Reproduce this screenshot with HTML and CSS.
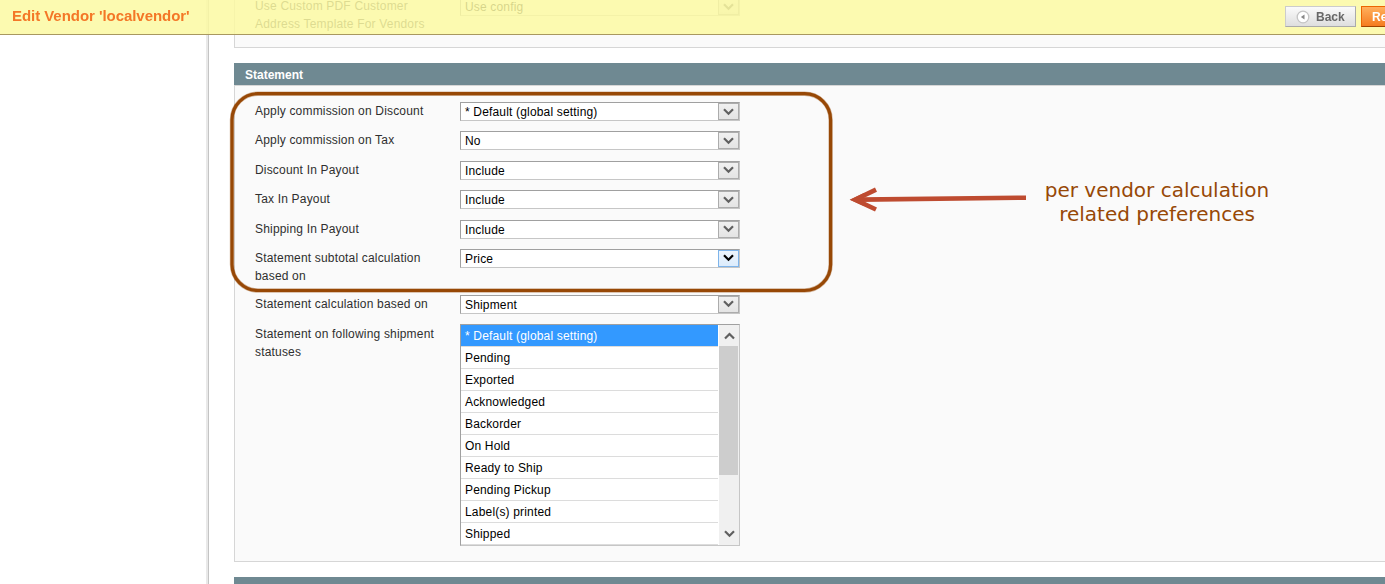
FILE: index.html
```html
<!DOCTYPE html>
<html lang="en">

<head>
    <meta charset="UTF-8">
    <meta name="viewport" content="width=device-width, initial-scale=1.0">
    <title>Edit Vendor</title>
    <link rel="stylesheet" href="styles.css">
</head>

<body>
    <!-- floating toolbar -->
    <header class="toolbar">
        <h3>Edit Vendor 'localvendor'</h3>
        <div class="buttons">
            <button class="btn back">
                <svg width="14" height="14" viewBox="0 0 14 14">
                    <circle cx="7" cy="7" r="5.8" fill="#fff" stroke="#c4c4c4" stroke-width="1.3" />
                    <path d="M8.5 4.6v5L4.9 7.1z" fill="#888" />
                </svg>
                <span>Back</span>
            </button>
            <button class="btn reset">Reset</button>
        </div>
    </header>

    <div class="columns">
        <aside class="side"></aside>
        <main class="main">
            <section class="fieldset first">
                <div class="row">
                    <label>Use Custom PDF Customer<br>Address Template For Vendors</label>
                    <div class="select"><span>Use config</span><i><svg width="11" height="8"><path d="M1 1.2 5.5 5.7 10 1.2" /></svg></i></div>
                </div>
            </section>

            <h4 class="head">Statement</h4>
            <section class="fieldset">
                <div class="row">
                    <label>Apply commission on Discount</label>
                    <div class="select"><span>* Default (global setting)</span><i><svg width="11" height="8"><path d="M1 1.2 5.5 5.7 10 1.2" /></svg></i></div>
                </div>
                <div class="row">
                    <label>Apply commission on Tax</label>
                    <div class="select"><span>No</span><i><svg width="11" height="8"><path d="M1 1.2 5.5 5.7 10 1.2" /></svg></i></div>
                </div>
                <div class="row">
                    <label>Discount In Payout</label>
                    <div class="select"><span>Include</span><i><svg width="11" height="8"><path d="M1 1.2 5.5 5.7 10 1.2" /></svg></i></div>
                </div>
                <div class="row">
                    <label>Tax In Payout</label>
                    <div class="select"><span>Include</span><i><svg width="11" height="8"><path d="M1 1.2 5.5 5.7 10 1.2" /></svg></i></div>
                </div>
                <div class="row">
                    <label>Shipping In Payout</label>
                    <div class="select"><span>Include</span><i><svg width="11" height="8"><path d="M1 1.2 5.5 5.7 10 1.2" /></svg></i></div>
                </div>
                <div class="row tall">
                    <label>Statement subtotal calculation<br>based on</label>
                    <div class="select hover"><span>Price</span><i><svg width="11" height="8"><path d="M1 1.2 5.5 5.7 10 1.2" /></svg></i></div>
                </div>
                <div class="row">
                    <label>Statement calculation based on</label>
                    <div class="select"><span>Shipment</span><i><svg width="11" height="8"><path d="M1 1.2 5.5 5.7 10 1.2" /></svg></i></div>
                </div>
                <div class="row multi">
                    <label>Statement on following shipment<br>statuses</label>
                    <div class="list">
                        <ul>
                            <li class="selected">* Default (global setting)</li>
                            <li>Pending</li>
                            <li>Exported</li>
                            <li>Acknowledged</li>
                            <li>Backorder</li>
                            <li>On Hold</li>
                            <li>Ready to Ship</li>
                            <li>Pending Pickup</li>
                            <li>Label(s) printed</li>
                            <li>Shipped</li>
                        </ul>
                        <div class="scrollbar">
                            <svg width="11" height="8"><path d="M1 6.5 5.5 2 10 6.5" /></svg>
                            <div class="thumb"></div>
                            <svg class="down" width="11" height="8"><path d="M1 1.2 5.5 5.7 10 1.2" /></svg>
                        </div>
                    </div>
                </div>
            </section>

            <h4 class="head"></h4>
        </main>
    </div>

    <!-- callout over the form -->
    <svg class="marks" width="1385" height="584">
        <rect class="halo" x="232" y="93.7" width="598.6" height="196.8" rx="26" />
        <rect class="line" x="232" y="93.7" width="598.6" height="196.8" rx="26" />
        <path class="arrow" d="M1026 197.7 860 199.6" />
        <path class="arrow" d="M876 189.6 855 199.7 876 209.5" />
        <path class="tip" d="M850 199.7 864 193v13z" />
    </svg>
    <p class="note">per vendor calculation<br>related preferences</p>
</body>

</html>
```

FILE: styles.css
```css
* {
    margin: 0;
    padding: 0;
    box-sizing: border-box;
}

body {
    height: 584px;
    overflow: hidden;
    position: relative;
    background: #fff;
    color: #2f2f2f;
    font: 12px/18px "Liberation Sans", Arial, sans-serif;
}

ul li {
    list-style: none;
}

svg {
    display: block;
}

.toolbar {
    position: fixed;
    top: 0;
    left: 0;
    z-index: 5;
    display: flex;
    justify-content: space-between;
    width: 1424px;
    height: 35px;
    padding: 6px 12px 0;
    background: rgba(252, 249, 162, .85);
    border-bottom: 1px solid #a89860;
}

.toolbar h3 {
    color: #f47727;
    font-size: 15px;
    line-height: 20px;
    letter-spacing: -.05px;
}

.buttons {
    display: flex;
    gap: 5px;
    width: 127px;
}

.btn {
    display: flex;
    align-items: center;
    height: 21px;
    border: 1px solid #ccc;
    border-color: #ccc #aaa #aaa #ccc;
    font: bold 12px "Liberation Sans", Arial, sans-serif;
}

.back {
    flex: none;
    width: 71px;
    padding-left: 10px;
    gap: 6px;
    color: #676767;
    background: linear-gradient(#fbfbfb, #dedede);
}

.reset {
    flex: none;
    width: 52px;
    padding-left: 10px;
    color: #fff;
    border-color: #ed6502 #a04300 #a04300 #ed6502;
    background: linear-gradient(#ffb05c, #f57c20);
}

.columns {
    display: flex;
    height: 584px;
}

.side {
    flex: none;
    width: 209px;
    border-right: 1px solid #c4c4c4;
    box-shadow: inset -2px 0 0 #e9e9e9;
}

.main {
    flex: 1;
    padding-left: 25px;
}

.fieldset {
    height: 477px;
    padding: 16px 0 0 20px;
    margin-bottom: 15px;
    background: #fafafa;
    border: 1px solid #d6d6d6;
    border-right: none;
}

.first {
    height: 51px;
    margin-top: -3px;
    padding-top: 0;
    border-top: none;
}

.head {
    height: 22px;
    padding-left: 11px;
    background: #6f8992;
    color: #fff;
    font-size: 12px;
    line-height: 24px;
}

.row {
    display: flex;
    align-items: flex-start;
    height: 29.4px;
}

.tall {
    height: 46px;
}

.multi {
    height: 222px;
}

.row label {
    width: 205px;
    letter-spacing: .18px;
}

.multi label {
    padding-top: 1px;
}

.select {
    display: flex;
    width: 280px;
    height: 19px;
    background: #fff;
    border: 1px solid #c6c6c6;
    border-top-color: #a0a0a0;
    border-left-color: #a0a0a0;
    color: #000;
}

.select span {
    flex: 1;
    padding-left: 4px;
    line-height: 18px;
    letter-spacing: .17px;
}

.select i {
    display: flex;
    align-items: center;
    justify-content: center;
    width: 21px;
    height: 17px;
    background: linear-gradient(#f0f0f0, #e4e4e4);
    border: 1px solid #acacac;
}

.select path,
.scrollbar path {
    fill: none;
    stroke: #606060;
    stroke-width: 2.2;
}

.hover i {
    background: linear-gradient(#ecf4fc, #dcecfc);
    border-color: #7eb4ea;
}

.hover path {
    stroke: #000;
}

.list {
    display: flex;
    width: 280px;
    height: 222px;
    background: #fff;
    border: 1px solid #c6c6c6;
    border-top-color: #a0a0a0;
    border-left-color: #a0a0a0;
    color: #000;
}

.list ul {
    width: 257px;
}

.list li {
    height: 22px;
    padding-left: 4px;
    line-height: 22px;
    letter-spacing: .17px;
    border-bottom: 1px solid #dcdcdc;
}

.list .selected {
    background: #3399ff;
    color: #fff;
}

.scrollbar {
    display: flex;
    flex-direction: column;
    align-items: center;
    width: 20px;
    margin-left: 1px;
    padding: 7px 0;
    background: #f0f0f0;
}

.thumb {
    width: 19px;
    height: 129px;
    margin: 6px 1px 0 0;
    background: #cdcdcd;
}

.down {
    margin-top: auto;
}

.marks {
    position: absolute;
    top: 0;
    left: 0;
    fill: none;
}

.halo {
    stroke: #974806;
    stroke-width: 4.4;
    opacity: .4;
}

.line {
    stroke: #974806;
    stroke-width: 3.2;
}

.arrow {
    stroke: #be4b30;
    stroke-width: 4.6;
}

.tip {
    fill: #be4b30;
}

.note {
    position: absolute;
    top: 178px;
    left: 1036px;
    width: 242px;
    color: #974806;
    font: 20px/24px "DejaVu Sans", sans-serif;
    text-align: center;
}
```
